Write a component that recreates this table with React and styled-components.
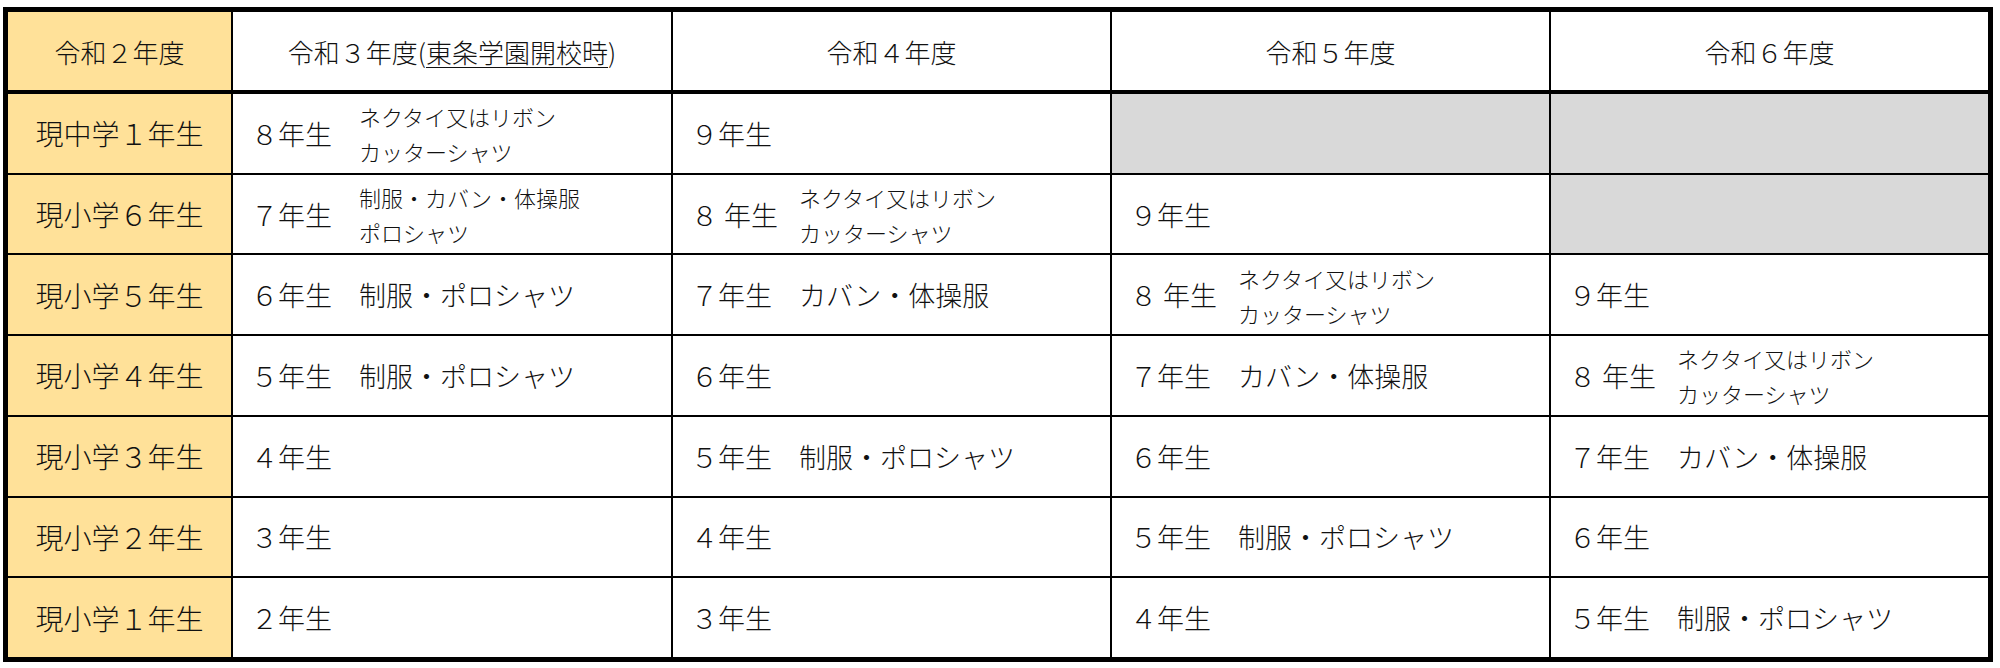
import React from "react";
import styled, { createGlobalStyle } from "styled-components";

const GlobalStyle = createGlobalStyle`
  html, body {
    margin: 0;
    padding: 0;
    background: #fff;
  }
  body {
    font-family: "Noto Sans CJK JP", "Noto Sans", sans-serif;
    font-weight: 300;
    color: #111;
  }
`;

const headers = [
  { text: "令和２年度" },
  { text: "令和３年度", sub: "東条学園開校時" },
  { text: "令和４年度" },
  { text: "令和５年度" },
  { text: "令和６年度" },
];

const TIE = ["ネクタイ又はリボン", "カッターシャツ"];
const BAG = ["制服・カバン・体操服", "ポロシャツ"];

const rows = [
  {
    name: "現中学１年生",
    cells: [{ g: "８年生", lines: TIE }, { g: "９年生" }, null, null],
  },
  {
    name: "現小学６年生",
    cells: [{ g: "７年生", lines: BAG }, { g: "８ 年生", lines: TIE }, { g: "９年生" }, null],
  },
  {
    name: "現小学５年生",
    cells: [
      { g: "６年生", note: "制服・ポロシャツ" },
      { g: "７年生", note: "カバン・体操服" },
      { g: "８ 年生", lines: TIE },
      { g: "９年生" },
    ],
  },
  {
    name: "現小学４年生",
    cells: [
      { g: "５年生", note: "制服・ポロシャツ" },
      { g: "６年生" },
      { g: "７年生", note: "カバン・体操服" },
      { g: "８ 年生", lines: TIE },
    ],
  },
  {
    name: "現小学３年生",
    cells: [
      { g: "４年生" },
      { g: "５年生", note: "制服・ポロシャツ" },
      { g: "６年生" },
      { g: "７年生", note: "カバン・体操服" },
    ],
  },
  {
    name: "現小学２年生",
    cells: [
      { g: "３年生" },
      { g: "４年生" },
      { g: "５年生", note: "制服・ポロシャツ" },
      { g: "６年生" },
    ],
  },
  {
    name: "現小学１年生",
    cells: [
      { g: "２年生" },
      { g: "３年生" },
      { g: "４年生" },
      { g: "５年生", note: "制服・ポロシャツ" },
    ],
  },
];

const App = () => {
  return (
    <>
      <GlobalStyle />
      <Table>
        {headers.map((h, i) => (
          <HeadCell key={i} $first={i === 0}>
            {h.text}
            {h.sub && (
              <>
                (<Under>{h.sub}</Under>)
              </>
            )}
          </HeadCell>
        ))}
        {rows.map((row, r) => (
          <React.Fragment key={r}>
            <NameCell>{row.name}</NameCell>
            {row.cells.map((c, i) =>
              c === null ? (
                <Cell key={i} $empty />
              ) : (
                <Cell key={i}>
                  <Grade $wide={!!(c.note || c.lines)}>{c.g}</Grade>
                  {c.note && <Note>{c.note}</Note>}
                  {c.lines && (
                    <SmallNote>
                      {c.lines.map((l, k) => (
                        <div key={k}>{l}</div>
                      ))}
                    </SmallNote>
                  )}
                </Cell>
              )
            )}
          </React.Fragment>
        ))}
      </Table>
    </>
  );
};

export default App;

const Table = styled.div`
  display: grid;
  grid-template-columns: 223px 438px repeat(3, 437px);
  grid-template-rows: 80px repeat(7, 1fr);
  column-gap: 2px;
  row-gap: 2px;
  width: 1990px;
  height: 655px;
  box-sizing: border-box;
  margin: 7px 0 0 3px;
  border: 5px solid #000;
  background: #000;
`;

const HeadCell = styled.div`
  display: flex;
  align-items: center;
  justify-content: center;
  background: ${(p) => (p.$first ? "#ffe199" : "#fff")};
  border-bottom: 2px solid #000;
  font-size: 26px;
  white-space: nowrap;
`;

const Under = styled.span`
  text-decoration: underline;
  text-underline-offset: 4px;
  text-decoration-thickness: 1px;
`;

const NameCell = styled.div`
  display: flex;
  align-items: center;
  justify-content: center;
  background: #ffe199;
  font-size: 28px;
`;

const Cell = styled.div`
  display: flex;
  align-items: center;
  padding-left: 18px;
  background: ${(p) => (p.$empty ? "#d9d9d9" : "#fff")};
  font-size: 27px;
  white-space: nowrap;
`;

const Grade = styled.span`
  display: inline-block;
  width: ${(p) => (p.$wide ? "108px" : "auto")};
  flex-shrink: 0;
`;

const Note = styled.span`
  font-size: 27px;
`;

const SmallNote = styled.div`
  display: flex;
  flex-direction: column;
  font-size: 22px;
  line-height: 35px;
  margin-top: 2px;
`;
